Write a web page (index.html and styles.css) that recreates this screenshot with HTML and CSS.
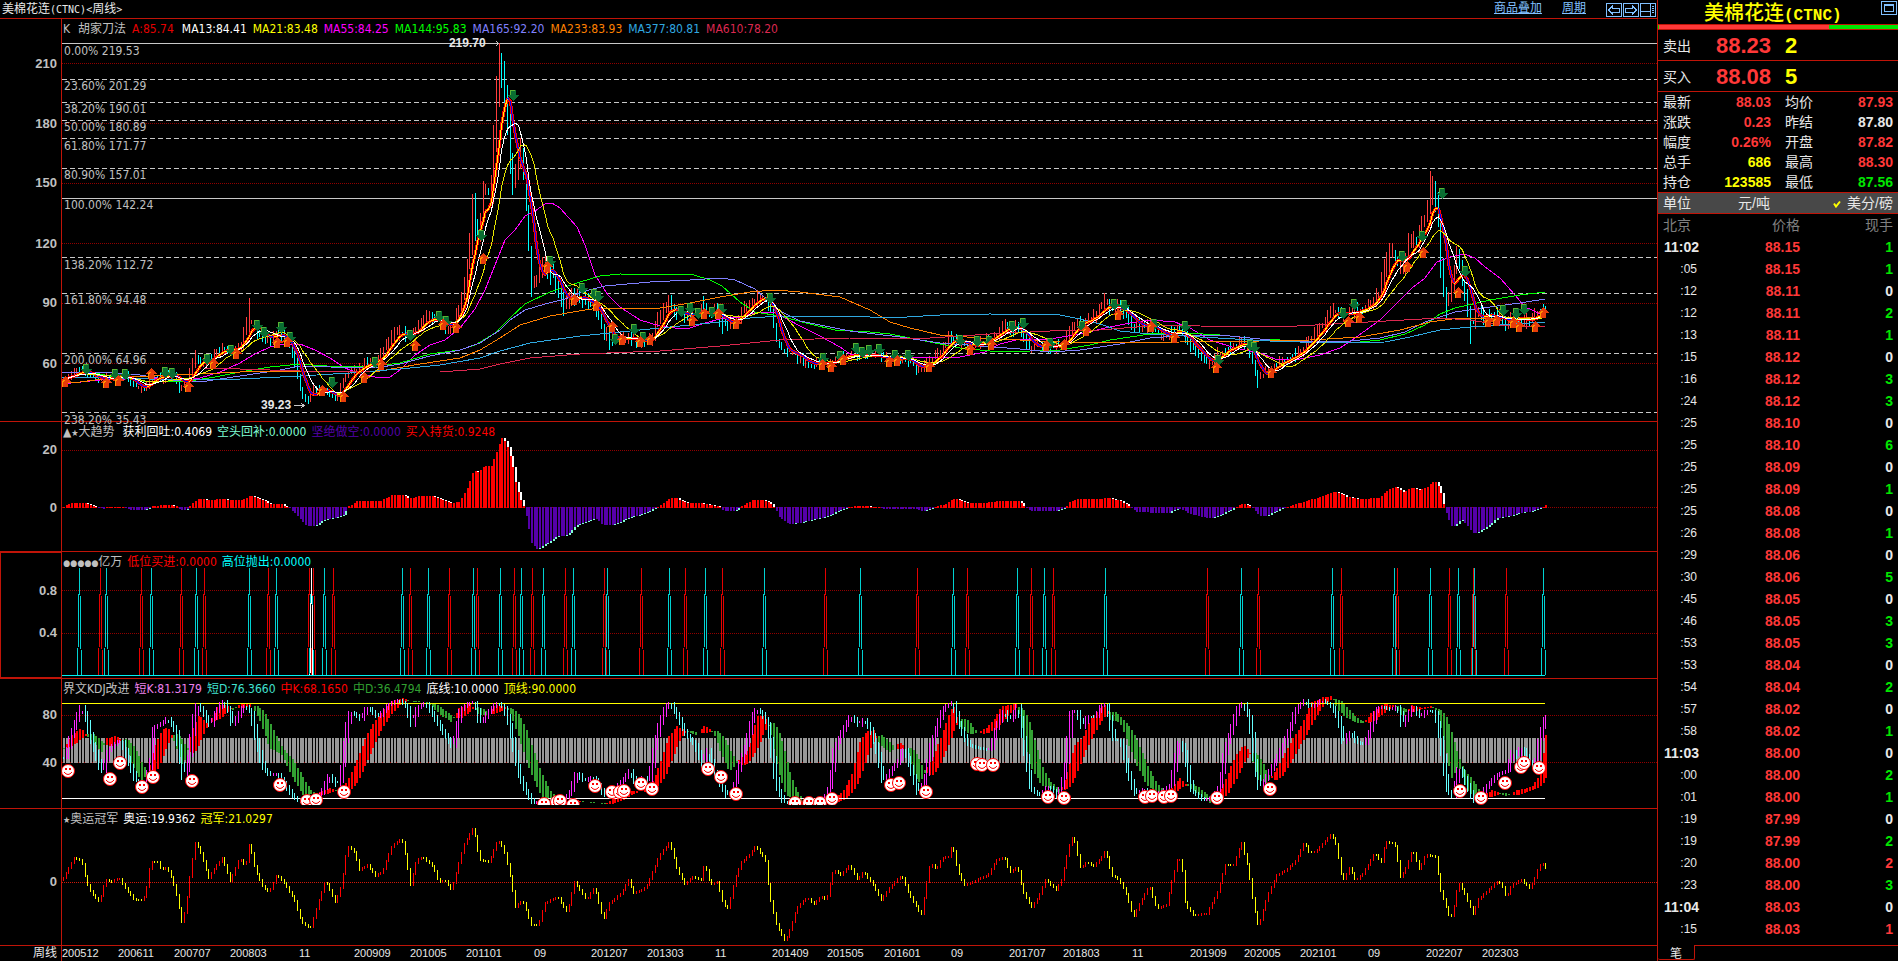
FILE: index.html
```html
<!DOCTYPE html>
<html lang="zh-CN">
<head>
    <meta charset="UTF-8">
    <meta name="viewport" content="width=device-width, initial-scale=1.0">
    <title>美棉花连(CTNC)</title>
    <link rel="stylesheet" href="styles.css">
</head>
<body>

    <main class="charts">
        <header class="topbar">
            <h1>美棉花连<span class="latin">(CTNC)&lt;</span>周线<span class="latin">&gt;</span></h1>
            <nav>
                <a href="#overlay">商品叠加</a>
                <a href="#period">周期</a>
                <div class="tools">
                    <button type="button" aria-label="后退">
                        <svg width="16" height="14" viewBox="0 0 16 14"><path d="M.5.5h15v13H.5zM2.5 7l4-4v2h7v4h-7v2z"/></svg>
                    </button>
                    <button type="button" aria-label="前进">
                        <svg width="16" height="14" viewBox="0 0 16 14"><path d="M.5.5h15v13H.5zM13.5 7l-4-4v2h-7v4h7v2z"/></svg>
                    </button>
                    <button type="button" aria-label="布局">
                        <svg width="16" height="14" viewBox="0 0 16 14"><path d="M.5.5h15v13H.5zM10.5.5v13M.5 8.5h10M12 3.5h2M12 5.5h2M12 7.5h2M12 9.5h2"/></svg>
                    </button>
                </div>
            </nav>
        </header>

        <section class="panel" id="price">
            <div class="scale"></div>
            <div class="plot">
                <div class="legend">
                    <span class="gray name-k">K</span><span class="gray">胡家刀法</span>
                    <span class="darkred name-a">A:85.74</span>
                    <span class="white">MA13:84.41</span>
                    <span class="yellow">MA21:83.48</span>
                    <span class="magenta">MA55:84.25</span>
                    <span class="lime">MA144:95.83</span>
                    <span class="violet">MA165:92.20</span>
                    <span class="orange">MA233:83.93</span>
                    <span class="sky">MA377:80.81</span>
                    <span class="rose">MA610:78.20</span>
                </div>
            </div>
        </section>

        <section class="panel" id="trend">
            <div class="scale"></div>
            <div class="plot">
                <div class="legend">
                    <span class="gray name">▲<small>★</small>大趋势</span>
                    <span class="white">获利回吐:0.4069</span>
                    <span class="aqua">空头回补:0.0000</span>
                    <span class="purple">坚绝做空:0.0000</span>
                    <span class="red">买入持货:0.9248</span>
                </div>
            </div>
        </section>

        <section class="panel selected" id="signal">
            <div class="scale"></div>
            <div class="plot">
                <div class="legend">
                    <span class="gray"><small>●●●●●</small>亿万</span>
                    <span class="red">低位买进:0.0000</span>
                    <span class="cyan">高位抛出:0.0000</span>
                </div>
            </div>
        </section>

        <section class="panel" id="kdj">
            <div class="scale"></div>
            <div class="plot">
                <div class="legend">
                    <span class="gray">界文KDJ改进</span>
                    <span class="pink">短K:81.3179</span>
                    <span class="turquoise">短D:76.3660</span>
                    <span class="red">中K:68.1650</span>
                    <span class="green">中D:36.4794</span>
                    <span class="white">底线:10.0000</span>
                    <span class="yellow">顶线:90.0000</span>
                </div>
            </div>
        </section>

        <section class="panel" id="champion">
            <div class="scale"></div>
            <div class="plot">
                <div class="legend">
                    <span class="gray"><small>★</small>奥运冠军</span>
                    <span class="white">奥运:19.9362</span>
                    <span class="yellow">冠军:21.0297</span>
                </div>
            </div>
        </section>

        <footer class="timeline">
            <span class="period">周线</span>
            <div class="dates" id="dates"></div>
        </footer>
    </main>

    <aside class="quote">
        <div class="quote-title">
            <h2>美棉花连<span>(CTNC)</span></h2>
            <button type="button" aria-label="窗口">
                <svg width="16" height="14" viewBox="0 0 16 14"><path d="M.5.5h15v13H.5zM3.5 3.5h9v7h-9zM3.5 4.5h9"/></svg>
            </button>
        </div>
        <div class="ratio"><i></i></div>
        <div class="best"><span>卖出</span><b class="up">88.23</b><b class="yellow">2</b></div>
        <div class="best"><span>买入</span><b class="up">88.08</b><b class="yellow">5</b></div>

        <dl class="facts">
            <dt>最新</dt><dd class="up">88.03</dd><dt>均价</dt><dd class="up">87.93</dd>
            <dt>涨跌</dt><dd class="up">0.23</dd><dt>昨结</dt><dd>87.80</dd>
            <dt>幅度</dt><dd class="up">0.26%</dd><dt>开盘</dt><dd class="up">87.82</dd>
            <dt>总手</dt><dd class="yellow">686</dd><dt>最高</dt><dd class="up">88.30</dd>
            <dt>持仓</dt><dd class="yellow">123585</dd><dt>最低</dt><dd class="down">87.56</dd>
        </dl>

        <div class="unit">
            <span>单位</span>
            <span class="unit-local">元/吨</span>
            <span class="unit-origin"><svg width="8" height="8" viewBox="0 0 8 8"><path d="M1 3.5l2 3L7 1.5"/></svg>美分/磅</span>
        </div>

        <table class="ticks">
            <thead>
                <tr><th>北京</th><th>价格</th><th>现手</th></tr>
            </thead>
            <tbody id="ticks"></tbody>
        </table>

        <div class="tabs">
            <button type="button" class="tab">笔</button>
        </div>
    </aside>

    <script src="chart.js"></script>
</body>
</html>
```
FILE: styles.css
```css
* {
    box-sizing: border-box;
}

body {
    margin: 0;
    height: 100vh;
    display: grid;
    grid-template-columns: minmax(0, 1fr) 241px;
    background: #000;
    color: #e8e8e8;
    font-family: "DejaVu Sans Condensed", "Liberation Sans", "Noto Sans CJK SC", sans-serif;
    font-size: 12px;
    line-height: 16px;
    overflow: hidden;
}

h1, h2, dl, dd {
    margin: 0;
    font-weight: normal;
}

button {
    padding: 0;
    border: 0;
    background: none;
    color: inherit;
    cursor: pointer;
}

.charts {
    display: grid;
    grid-template-rows: 18px 403fr 130fr 127fr 130fr 137fr 16px;
    min-height: 0;
}

/* top bar */
.topbar {
    display: flex;
    justify-content: space-between;
}

.topbar h1 {
    padding-left: 2px;
    font-size: 12px;
    line-height: 18px;
}

.topbar .latin {
    font-family: "DejaVu Sans Mono", monospace;
    font-size: 10px;
}

.topbar nav {
    display: flex;
    gap: 20px;
    padding-right: 1px;
}

.topbar a {
    color: #80c0ff;
    line-height: 17px;
}

.tools {
    display: flex;
    gap: 1px;
    padding: 1px 0 0;
}

.tools svg, .quote-title svg {
    display: block;
    fill: none;
    stroke: #80c0ff;
    shape-rendering: crispEdges;
}

/* chart panels */
.panel {
    display: grid;
    grid-template-columns: 62px minmax(0, 1fr);
    border-top: 1px solid #c01408;
    min-height: 0;
}

.scale {
    position: relative;
    border-right: 1px solid #c01408;
    color: #c0c0c0;
    font: bold 13px/16px "Liberation Sans", sans-serif;
}

.scale span {
    position: absolute;
    right: 4px;
    margin-top: -8px;
}

.selected .scale {
    outline: 1px solid #c01408;
    outline-offset: -1px;
    border: 1px solid #c01408;
}

.plot {
    position: relative;
    min-height: 0;
}

.plot > svg {
    position: absolute;
    width: 100%;
    height: 100%;
    fill: none;
    shape-rendering: crispEdges;
}

.legend {
    position: absolute;
    z-index: 1;
    top: 2px;
    left: 1px;
    display: flex;
    gap: 5px;
    white-space: nowrap;
}

#price .legend {
    gap: 6px;
}

.legend small {
    font-size: 9px;
}

.legend .name {
    margin-right: 3px;
}

.legend .name-k, .legend .name-a {
    margin-right: 2px;
}

.note {
    position: absolute;
    margin-top: -8px;
    color: #c0c0c0;
}

.note.extreme {
    color: #e8e8e8;
    font: bold 12px/16px "Liberation Sans", sans-serif;
}

.timeline {
    display: grid;
    grid-template-columns: 62px minmax(0, 1fr);
    border-top: 1px solid #c01408;
    line-height: 15px;
}

.period {
    padding-right: 4px;
    text-align: right;
    border-right: 1px solid #c01408;
}

.dates {
    display: flex;
    font-family: "Liberation Sans", sans-serif;
    font-size: 11px;
    overflow: hidden;
}

.dates span {
    flex-basis: 0;
    min-width: 0;
    white-space: nowrap;
}

/* quote column */
.quote {
    display: flex;
    flex-direction: column;
    border-left: 1px solid #c01408;
    font-family: "Liberation Sans", "Noto Sans CJK SC", sans-serif;
    font-size: 14px;
    min-height: 0;
}

.quote-title {
    display: flex;
    height: 24px;
    padding: 1px 1px 0 46px;
    justify-content: space-between;
    align-items: flex-start;
}

.quote-title h2 {
    color: #ff0;
    font-size: 20px;
    font-weight: 500;
    line-height: 24px;
}

.quote-title h2 span {
    font-family: "Liberation Mono", monospace;
    font-size: 16px;
    font-weight: bold;
}

.ratio {
    height: 6px;
    padding-left: 1px;
    border: solid #c01408;
    border-width: 1px 0;
    background: #00e600;
}

.ratio i {
    display: block;
    width: 71%;
    height: 4px;
    background: #ff3838;
}

.best {
    display: grid;
    grid-template-columns: 32px 76px 1fr;
    height: 31px;
    padding: 2px 0 0 5px;
    align-items: center;
    border-bottom: 1px solid #c01408;
}

.best b {
    font-size: 22px;
    text-align: right;
}

.best b:last-child {
    padding-left: 14px;
    text-align: left;
}

.facts {
    display: grid;
    grid-template-columns: 32px 76px 43px 1fr;
    padding: 0 5px;
    line-height: 20px;
}

.facts dd {
    text-align: right;
    font-weight: bold;
}

.facts dt:nth-of-type(even) {
    padding-left: 14px;
}

.unit {
    display: grid;
    grid-template-columns: 32px 75px 1fr;
    height: 22px;
    padding: 0 5px;
    border: solid #c01408;
    border-width: 1px 0;
    background: #484848;
    line-height: 20px;
}

.unit-local, .unit-origin {
    text-align: right;
}

.unit-origin svg {
    margin-right: 6px;
    fill: none;
    stroke: #ff0;
    stroke-width: 2;
}

.ticks {
    width: 100%;
    border-collapse: collapse;
    table-layout: fixed;
    line-height: 22px;
}

.ticks th, .ticks td {
    padding: 0;
    text-align: right;
    font-weight: bold;
}

.ticks th {
    color: #808080;
    font-weight: normal;
}

.ticks th:first-child {
    width: 41px;
    padding-left: 5px;
    text-align: left;
}

.ticks th:nth-child(2) {
    width: 101px;
}

.ticks th:last-child, .ticks td:last-child {
    padding-right: 5px;
}

.ticks .second {
    padding-right: 2px;
    font-size: 12px;
    font-weight: normal;
}

.tabs {
    height: 16px;
    margin-top: auto;
    border-top: 1px solid #c01408;
}

.tab {
    display: block;
    width: 37px;
    height: 15px;
    margin-top: -1px;
    border: 1px solid #c01408;
    border-width: 0 1px 1px 0;
    border-radius: 0 0 2px 2px;
    background: #000;
    font: 12px/15px "Noto Sans CJK SC", sans-serif;
}

/* colours */
.up { color: #ff3838; }
.down { color: #00e600; }
.gray { color: #c0c0c0; }
.white { color: #fff; }
.yellow { color: #ff0; }
.magenta { color: #f0f; }
.lime { color: #0f0; }
.violet { color: #8080ff; }
.orange { color: #ff8000; }
.sky { color: #30a8e0; }
.rose { color: #dc2850; }
.darkred { color: #e60000; }
.red { color: #f00; }
.aqua { color: #7fffd4; }
.purple { color: #5500aa; }
.cyan { color: #0ff; }
.pink { color: #ee82ee; }
.turquoise { color: #40e0d0; }
.green { color: #32a032; }
```
FILE: chart.js
```js
const LEFT = 62;
const WIDTH = 1595;
const LAST = 1545;
const STEP = 2.69;
const COUNT = Math.floor((LAST - LEFT) / STEP) + 1;

// "x,y x,y ..." to a list of pairs
function pairs(text) {
    return text.trim().split(/\s+/).map(p => p.split(',').map(Number));
}

// one value for every bar, interpolated between the points
function series(text) {
    const pts = pairs(text);
    const out = [];
    let k = 0;
    for (let i = 0; i < COUNT; i++) {
        const x = LEFT + i * STEP;
        while (k < pts.length - 2 && pts[k + 1][0] < x) k++;
        const [x1, y1] = pts[k];
        const [x2, y2] = pts[k + 1];
        const t = Math.max(0, Math.min(1, (x - x1) / (x2 - x1)));
        out.push(y1 + (y2 - y1) * t);
    }
    return out;
}

function average(list, n) {
    return list.map((v, i) => {
        const part = list.slice(Math.max(0, i - n + 1), i + 1);
        return part.reduce((a, b) => a + b, 0) / part.length;
    });
}

let seed = 7;
function random() {
    seed = (seed * 16807) % 2147483647;
    return seed / 2147483647;
}

const barX = i => Math.round(LEFT + 1 + i * STEP) + 0.5;

function path(d, color, width = 1, extra = '') {
    return `<path d="${d}" stroke="${color}" stroke-width="${width}" ${extra}/>`;
}

function line(list, color, width = 1) {
    return path('M' + list.map((v, i) => `${barX(i)} ${v.toFixed(1)}`).join('L'), color, width);
}

function level(y, color, extra = '', end = LEFT + WIDTH) {
    return path(`M${LEFT} ${y}H${end}`, color, 1, extra);
}

function draw(id, top, height, labels, content) {
    const panel = document.getElementById(id);
    const grid = labels.map(l => level(l[1], id === 'champion' ? '#d01808' : '#900000', 'stroke-dasharray="1 1"')).join('');
    panel.querySelector('.plot').insertAdjacentHTML('afterbegin',
        `<svg viewBox="${LEFT} ${top} ${WIDTH} ${height}" preserveAspectRatio="none">${grid}${content}</svg>`);
    panel.querySelector('.scale').innerHTML = labels.map(l =>
        `<span style="top:${((l[1] - top) / height * 100).toFixed(2)}%">${l[0]}</span>`).join('');
}

/* ---------- price ---------- */
const close = series(`62,380 70,374 78,371 86,373 95,380 103,378 112,378 122,374 130,384 143,390 148,378 152,374
160,380 166,373 172,374 178,388 186,380 190,366 194,356 200,365 208,358 216,350 224,350 232,350 240,342 245,325
250,320 255,330 260,338 268,340 273,330 280,338 290,350 294,365 300,395 306,402 312,388 320,390 328,393 334,400
340,385 348,372 355,370 365,362 375,362 384,346 392,334 400,332 408,338 415,326 425,318 435,320 445,328 452,322
458,305 463,280 468,245 471,205 474,235 478,225 481,195 485,190 489,200 492,150 495,90 498,60 501,80 505,110
509,170 512,190 515,165 518,150 521,160 524,200 527,245 530,285 533,285 537,270 540,265 546,270 553,280 558,295
563,308 570,295 578,297 585,303 592,305 598,315 602,338 606,330 612,342 620,337 628,338 640,342 650,338 655,322
660,315 667,304 672,312 680,314 690,316 700,310 706,313 715,312 722,325 730,322 740,312 752,300 758,297 764,298
768,303 772,325 776,345 782,352 790,352 800,360 808,366 816,362 825,365 832,360 840,357 850,355 860,355 870,355
880,358 890,358 900,358 910,362 916,372 922,366 930,360 940,350 947,338 955,340 965,346 975,345 985,340 995,334
1002,326 1010,330 1016,325 1022,336 1028,348 1040,345 1050,347 1060,345 1067,334 1072,325 1080,322 1090,318
1098,309 1105,303 1112,310 1118,308 1124,312 1130,325 1140,325 1150,325 1158,336 1165,335 1175,330 1182,335
1190,348 1197,352 1203,362 1210,365 1216,353 1224,350 1234,345 1240,342 1247,346 1252,368 1257,380 1263,372
1272,366 1282,360 1292,356 1300,349 1310,338 1320,326 1327,315 1333,309 1340,316 1350,312 1360,310 1370,302
1378,292 1383,268 1390,252 1396,265 1402,262 1409,240 1416,242 1422,222 1428,205 1430,185 1433,195 1437,230
1440,280 1444,300 1448,294 1452,270 1456,256 1460,275 1464,300 1470,325 1476,312 1484,318 1492,315 1498,318
1504,324 1512,315 1520,322 1530,318 1538,311 1545,313`);

// highs and lows that stand out: x, y
const wicks = pairs(`249,298 471,194 474,168 482,172 486,184 495,52 498,57 500,43 503,69 507,85 668,295 703,296
1017,309 1105,293 1332,292 1390,243 1430,171 1434,179 1456,246`);
const dips = pairs(`307,406 180,393 334,402 531,297 538,296 564,316 603,352 609,350 917,375 783,360 1258,388 1471,344
1447,320 722,334`);

let red = '', cyan = '';
let prev = close[0];
close.forEach((c, i) => {
    const x = barX(i);
    const calm = 4 + (400 - c) * 0.06;
    let top = Math.min(c, prev) - random() * calm;
    let bottom = Math.max(c, prev) + random() * calm;
    wicks.forEach(w => { if (Math.abs(w[0] - x) < STEP / 2) top = w[1]; });
    dips.forEach(w => { if (Math.abs(w[0] - x) < STEP / 2) bottom = w[1]; });
    const d = `M${x} ${top.toFixed(1)}V${bottom.toFixed(1)}`;
    if (c + (random() - 0.5) * 6 < prev) red += d; else cyan += d;
    prev = c;
});

const fast = average(close, 6);
let warm = '', blue = '';
fast.forEach((v, i) => {
    if (!i) return;
    const d = `M${barX(i - 1)} ${fast[i - 1].toFixed(1)}L${barX(i)} ${v.toFixed(1)}`;
    if (v <= fast[i - 1]) warm += d; else blue += d;
});

const averages = [
    ['#f0f', `62,384 100,380 150,378 180,381 200,378 220,372 240,363 255,354 270,347 285,344 300,344 315,350 330,358 345,368
    360,374 380,378 390,377 400,370 415,355 430,345 445,340 460,328 475,309 485,290 495,265 505,240 515,230 525,216 535,211
    545,204 552,203 560,208 577,227 585,245 595,275 608,295 620,307 640,320 660,326 675,328 690,328 705,323 720,319 740,317
    758,312 775,312 785,318 800,326 820,336 840,347 850,354 860,356 900,357 940,358 960,357 985,352 1000,344 1020,339
    1050,339 1080,334 1105,328 1130,323 1150,320 1175,322 1190,328 1210,340 1235,348 1260,353 1275,359 1300,359 1320,355
    1340,348 1355,338 1380,320 1400,300 1412,288 1425,278 1437,262 1450,257 1464,254 1475,258 1485,267 1500,278 1515,295
    1525,307 1532,310 1545,316`],
    ['#0f0', `62,373 90,372 110,376 150,382 190,381 215,377 240,372 270,367 300,364 340,367 375,366 400,363 430,354 460,350
    475,345 495,333 510,318 525,304 550,292 580,282 600,276 620,274 694,275 710,280 722,286 740,302 755,312 780,316 810,324
    835,330 870,332 890,334 930,342 960,348 1000,352 1030,351 1060,350 1090,345 1110,340 1150,334 1185,333 1220,335
    1260,339 1300,341 1350,343 1380,340 1405,334 1425,325 1440,314 1455,308 1490,300 1520,295 1545,292`],
    ['#8080ff', `62,372 100,372 140,375 170,380 200,382 240,376 280,370 300,366 330,367 375,368 400,364 430,356 460,350
    480,343 500,330 510,320 525,310 545,304 565,299 585,291 605,286 650,282 690,280 720,278 735,280 755,289 780,311 800,321
    850,331 900,337 940,343 980,346 1020,349 1050,352 1080,350 1120,344 1150,338 1190,335 1230,336 1270,340 1310,342
    1350,341 1380,338 1405,332 1425,322 1455,312 1490,307 1520,303 1545,299`],
    ['#ff8000', `62,382 80,382 110,378 150,376 200,374 260,371 330,371 380,371 420,364 460,358 480,350 500,338 520,325
    550,316 585,310 600,308 660,308 690,303 720,297 750,292 775,290 800,292 840,297 870,310 890,322 910,328 940,335 980,338
    1060,342 1130,343 1180,342 1260,341 1310,340 1360,337 1400,330 1430,322 1460,318 1500,318 1545,317`],
    ['#30a8e0', `62,377 150,379 240,379 300,376 350,373 400,369 440,365 480,358 500,351 530,343 580,336 620,332 680,326
    720,322 750,318 780,316 850,316 890,318 940,315 990,314 1060,315 1080,319 1100,324 1120,331 1150,334 1200,337 1270,341
    1330,343 1385,342 1410,337 1440,330 1470,327 1545,322`],
    ['#dc2850', `204,368 240,369 300,371 370,372 440,372 480,369 500,364 530,358 580,354 660,351 720,346 780,340 850,338
    930,338 990,334 1050,331 1100,330 1160,325 1200,326 1280,327 1350,323 1440,318 1470,320 1500,325 1545,327`]
];

const sells = pairs(`86,369 115,374 125,374 165,372 172,373 207,359 231,350 257,325 264,332 281,327 290,337 332,382
375,362 410,335 439,316 446,321 481,235 513,95 550,261 582,288 594,294 598,296 615,339 634,329 643,337 681,311 690,308
698,313 712,312 721,309 770,298 823,358 840,356 856,348 862,352 869,350 879,349 895,355 908,355 960,340 977,341 989,341
1012,326 1023,323 1050,343 1082,326 1114,304 1124,305 1154,324 1185,326 1218,360 1250,345 1254,347 1343,313 1354,304
1402,256 1422,236 1442,193 1465,271 1503,310 1516,313 1524,309`);
const buys = pairs(`65,382 106,383 118,381 151,374 188,387 213,364 236,354 277,343 287,342 322,391 343,397 364,378
381,365 415,346 443,325 456,328 483,259 547,267 574,300 596,306 612,327 622,340 640,342 650,340 692,321 704,314 718,314
736,324 822,365 831,367 843,360 889,362 897,361 929,367 970,350 991,345 1046,346 1064,345 1086,331 1118,315 1151,327
1174,338 1216,368 1271,373 1348,322 1359,318 1407,267 1423,253 1458,293 1488,322 1496,321 1513,323 1519,327 1535,327
1543,313`);

const arrows =
    sells.map(p => `<path fill="#0a6e32" d="M${p[0] - 3} ${p[1] - 5}h6v5h3l-6 6l-6-6h3z"/><path stroke="#5ab432" d="M${p[0] - 3} ${p[1] - 4.5}h5M${p[0] - 2.5} ${p[1] - 4}v4"/>`).join('') +
    buys.map(p => `<path fill="#e63c0a" d="M${p[0] - 3} ${p[1] + 5}h6v-5h3l-6-6l-6 6h3z"/><path stroke="#ff9600" d="M${p[0] - 2.5} ${p[1] + 5}v-5l2-2"/>`).join('');

const fibs = [
    [43.5, '0.00% 219.53'], [79.5, '23.60% 201.29'], [102.5, '38.20% 190.01'], [120.5, '50.00% 180.89'],
    [138.5, '61.80% 171.77'], [168.5, '80.90% 157.01'], [198.5, '100.00% 142.24'], [257.5, '138.20% 112.72'],
    [293.5, '161.80% 94.48'], [353.5, '200.00% 64.96'], [412.5, '238.20% 35.43']
];

draw('price', 19, 402,
    [[210, 63.5], [180, 123.5], [150, 183.5], [120, 243.5], [90, 303.5], [60, 363.5]],
    fibs.map(f => level(f[0], '#c8c8c8', /^(0|100)\./.test(f[1]) ? '' : 'stroke-dasharray="5 3"')).join('') +
    path(red, '#ff3c3c') + path(cyan, '#0ff') +
    averages.map(a => path('M' + pairs(a[1]).map(p => p.join(' ')).join('L'), a[0])).join('') +
    path(warm, '#f00', 3) + path(blue, '#f00', 3) + path(warm, '#ff0') + path(blue, '#00f') +
    line(average(close, 15), '#e6e600') + line(average(close, 9), '#fff') +
    path('M294 405.5H304M301 403l3 2.5l-3 2.5M496 41l2 2.5l-2 2.5', '#c8c8c8') +
    arrows);

const notes = fibs.map(f => [64, f[0] + 7, f[1], '']);
notes.push([449, 43.5, '219.70', ' extreme'], [261, 405.5, '39.23', ' extreme']);
document.querySelector('#price .plot').insertAdjacentHTML('beforeend', notes.map(n =>
    `<span class="note${n[3]}" style="left:${((n[0] - LEFT) / WIDTH * 100).toFixed(2)}%;top:${((n[1] - 19) / 402 * 100).toFixed(2)}%">${n[2]}</span>`).join(''));

/* ---------- trend histogram ---------- */
const trend = series(`62,1 70,4 80,5 88,3 95,0 100,-1 103,-1 106,1 120,1 128,-2 140,-3 147,-1 150,1 165,3 175,1 180,-3
187,-1 190,4 198,9 210,7 220,9 228,7 240,8 250,12 258,9 268,4 280,3 288,-1 295,-7 305,-18 313,-19 323,-12 335,-10 342,-7
347,1 355,6 368,7 380,7 390,12 400,13 408,9 420,12 430,12 440,8 450,4 458,6 466,20 472,38 476,35 483,42 490,42 496,58
500,70 504,66 510,47 515,20 520,5 523,0 526,-15 530,-35 536,-42 545,-36 555,-29 565,-28 575,-18 585,-14 595,-11 602,-18
612,-17 628,-10 640,-7 655,0 660,3 668,9 673,10 685,5 700,4 718,1 723,-4 733,-3 738,0 750,7 762,8 768,5 773,0 778,-10
787,-17 800,-15 825,-9 845,0 860,2 878,0 882,-2 900,-1 912,-1 922,-4 932,0 945,4 952,9 965,5 980,4 1000,7 1018,6 1024,0
1030,-4 1055,-3 1064,0 1068,5 1075,8 1103,9 1107,10 1120,6 1128,1 1135,-4 1148,-5 1165,-6 1178,-1 1190,-7 1208,-11 1220,-7
1232,-1 1240,4 1250,1 1258,-9 1265,-8 1280,-1 1290,2 1310,8 1328,14 1333,16 1345,11 1360,8 1378,10 1386,17 1394,21
1402,15 1410,20 1418,17 1425,20 1433,27 1438,20 1442,3 1446,-10 1451,-20 1460,-12 1466,-18 1471,-26 1478,-24 1487,-18
1495,-11 1510,-8 1520,-5 1530,-4 1538,-1 1545,3`);
let rise = '', fall = '', fade = '', recover = '';
trend.forEach((v, i) => {
    const x = barX(i) + 0.5;
    const y = Math.round(507.5 - v);
    const old = Math.round(507.5 - (trend[i - 1] || 0));
    if (v >= 0) {
        rise += `M${x} 508V${y}`;
        if (old < y) fade += `M${x} ${y}V${old}`;
    } else {
        fall += `M${x} 507V${y}`;
        if (old > y && old < 560) recover += `M${x} ${y}V${old}`;
    }
});
draw('trend', 422, 129, [[20, 450.5], [0, 507.5]],
    path(rise, '#f00', 2) + path(fall, '#5500aa', 2) + path(fade, '#fff', 2) + path(recover, '#7fffd4', 2));

/* ---------- signal spikes ---------- */
const highs = [79.5, 106.5, 151.5, 196.5, 249.5, 276.5, 311.5, 324.5, 402.5, 428.5, 473.5, 500.5, 521.5, 543.5, 573.5, 607.5,
    669.5, 705.5, 764.5, 860.5, 953.5, 1017.5, 1044.5, 1105.5, 1241.5, 1332.5, 1394.5, 1430.5, 1458.5, 1474.5, 1543.5];
const lows = [100.5, 141.5, 181.5, 204.5, 268.5, 309.5, 313.5, 333.5, 410.5, 449.5, 477.5, 514.5, 532.5, 565.5, 604.5,
    641.5, 685.5, 722.5, 825.5, 917.5, 967.5, 1031.5, 1053.5, 1207.5, 1258.5, 1341.5, 1397.5, 1449.5, 1473.5, 1506.5];
const spikes = list => list.map(x => `M${x - 2} 675L${x} 568L${x + 2} 675`).join('');
draw('signal', 552, 126, [['0.8', 590.5], ['0.4', 633.5]],
    `${path(spikes(lows), '#e60000')}${path(spikes(highs), '#00d2d2')}${path('M310 675L311.5 568L313 675', '#fff')}` +
    level(675.5, '#00f0f0', '', LAST));

/* ---------- kdj ---------- */
const short = series(`62,758 68,735 78,706 82,715 88,740 99,775 104,752 110,745 118,740 125,760 132,780 142,785 148,760
150,728 158,724 164,718 172,730 176,750 180,780 184,768 187,748 190,720 194,703 200,712 207,727 212,713 220,700 226,712
229,726 235,715 241,705 248,712 254,745 260,768 267,776 274,773 280,782 290,797 300,803 312,803 320,790 326,774 335,788
338,775 342,740 346,712 352,714 358,720 364,706 375,718 385,705 395,700 403,705 409,726 414,708 422,702 430,715 440,732
450,748 457,710 465,703 472,702 477,725 485,712 494,702 500,706 505,720 510,745 516,775 522,790 530,803 545,800 560,803
568,790 574,770 580,782 590,776 602,797 610,790 620,780 627,770 632,783 640,777 646,782 651,750 656,725 663,705 667,703
675,717 683,735 692,745 700,768 704,745 710,770 718,785 724,797 730,790 736,765 743,745 747,725 752,708 758,712 764,722
768,745 773,785 780,802 800,804 820,803 827,785 831,750 840,730 848,715 856,727 860,718 868,730 875,755 880,783 888,770
896,760 900,745 908,770 915,795 922,780 928,745 935,722 940,708 950,702 955,722 965,745 975,748 987,750 993,728 1000,710
1007,722 1015,703 1020,740 1028,790 1038,796 1045,785 1055,797 1062,770 1065,740 1068,712 1073,710 1079,728 1085,715
1092,718 1098,705 1104,704 1107,725 1111,740 1118,740 1124,770 1132,795 1142,788 1150,797 1168,785 1172,760 1175,742
1180,745 1188,790 1200,800 1210,798 1217,785 1222,750 1228,730 1234,708 1240,702 1247,720 1251,760 1256,790 1262,780
1270,765 1280,745 1288,725 1292,710 1302,700 1308,708 1318,700 1328,705 1336,720 1340,745 1347,730 1353,742 1361,745
1368,728 1373,708 1380,707 1388,710 1395,705 1399,726 1405,715 1410,706 1417,718 1424,710 1432,712 1438,745 1444,790
1450,797 1456,765 1464,785 1471,803 1477,795 1485,785 1495,774 1505,770 1508,750 1515,758 1518,745 1525,760 1532,770
1536,740 1541,718 1545,715`);
const middle = series(`62,748 70,735 79,728 86,737 94,745 100,752 105,738 115,736 122,742 130,765 140,782 147,770 152,748
160,730 166,727 173,742 180,765 184,758 190,730 197,715 207,725 216,705 225,705 232,710 240,702 250,705 258,720 268,748
280,755 292,780 302,796 315,793 328,788 340,793 346,780 355,760 365,735 375,718 388,702 400,698 412,702 425,702 440,716
450,722 457,708 468,703 477,715 485,715 493,705 502,706 508,712 518,740 528,770 540,797 560,802 575,800 590,803 605,803
625,790 640,792 650,783 658,765 666,738 675,726 685,732 695,735 703,725 712,733 720,755 728,772 735,762 745,752 752,730
756,716 763,716 769,732 776,770 784,795 800,802 830,802 842,790 850,775 858,742 864,732 872,730 878,745 888,752 898,742
906,750 912,775 918,783 925,768 932,755 940,735 948,712 952,705 958,728 970,735 985,728 992,720 1000,706 1010,705
1015,703 1020,730 1028,765 1040,785 1058,793 1066,770 1073,745 1082,735 1088,720 1098,708 1104,704 1108,720 1118,722
1125,740 1135,765 1145,785 1155,794 1170,788 1178,778 1190,790 1208,803 1218,790 1226,775 1234,755 1242,745 1248,752
1256,780 1265,783 1275,768 1290,740 1300,725 1310,702 1322,697 1330,696 1336,710 1345,718 1355,723 1362,723 1370,712
1382,704 1393,705 1400,717 1410,705 1420,708 1430,706 1436,712 1444,750 1450,778 1457,765 1465,790 1475,800 1490,790
1505,796 1515,790 1530,787 1538,775 1545,730`);
const slow = average(average(middle, 4), 6);

let band = '', over = '', under = '', up = '', down = '';
for (let i = 0; i < COUNT; i++) {
    const x = barX(i);
    band += `M${x + 0.5} 738V763`;
    const body = `M${x + 0.5} ${middle[i].toFixed(1)}V${(slow[i] + 1).toFixed(1)}`;
    if (middle[i] < slow[i]) over += body; else under += body;
    const from = short[Math.max(0, i - 2)];
    const d = `M${x} ${(Math.min(from, short[i]) - 1).toFixed(1)}V${(Math.max(from, short[i]) + 1).toFixed(1)}`;
    if (short[i] < from) up += d; else down += d;
}

const faces = pairs(`68,771 110,779 120,763 142,787 153,777 192,781 280,785 307,801 316,800 344,792 544,804 557,802
560,801 573,805 595,786 612,792 620,792 624,791 641,784 652,789 708,769 721,777 736,794 795,803 809,803 820,803 832,799
891,785 899,783 926,792 977,764 982,765 993,765 1048,797 1064,798 1145,797 1152,796 1164,797 1171,796 1217,798 1270,789
1460,791 1481,798 1505,783 1521,767 1524,763 1539,768`);
const smile = p => `<g><circle cx="${p[0]}" cy="${p[1]}" r="6.5" fill="#fff" stroke="#f00"/>` +
    `<path stroke="#f00" stroke-width="2" d="M${p[0] - 3} ${p[1] - 2}h2M${p[0] + 1} ${p[1] - 2}h2"/>` +
    `<path stroke="#f00" d="M${p[0] - 4} ${p[1] + 1}q4 5 8 0"/></g>`;

draw('kdj', 679, 129, [[80, 715.5], [40, 762.5]],
    path(band, '#989898', 2) + path(over, '#f00', 2) + path(under, '#32a032', 2) +
    level(703.5, '#ff0', '', LAST) + level(798.5, '#fff', '', LAST) +
    path(up, '#ff28ff') + path(down, '#6ff') +
    `<clipPath id="floor"><rect x="${LEFT}" y="679" width="${WIDTH}" height="126"/></clipPath>` +
    `<g clip-path="url(#floor)" shape-rendering="auto">${faces.map(smile).join('')}</g>`);

/* ---------- champion ---------- */
const champ = series(`62,878 68,867 73,858 80,860 85,882 90,893 98,902 104,880 110,882 118,878 125,890 133,900 142,900
146,885 149,862 156,862 160,870 165,867 171,880 175,895 181,925 186,895 190,865 194,842 200,855 207,878 214,867 221,858
229,882 238,858 244,867 248,843 254,870 262,888 268,892 275,875 284,885 293,900 300,922 309,929 316,905 324,880 334,903
340,885 346,846 353,852 358,870 366,865 374,876 381,872 390,847 400,838 403,850 409,885 415,860 421,857 432,867 437,882
443,880 450,890 456,868 463,843 472,827 476,850 478,860 488,862 496,840 502,848 508,873 514,907 521,900 530,925 537,925
543,903 556,897 566,912 573,882 585,900 593,887 602,920 608,903 620,893 627,880 632,893 640,890 645,887 650,875 658,855
668,842 676,870 684,885 690,877 700,880 703,863 709,885 716,882 722,905 727,908 733,880 740,862 748,855 754,846 764,860
768,895 775,925 784,942 790,925 795,908 806,897 812,905 820,896 825,900 832,870 840,875 848,865 856,880 862,872 872,885
880,900 888,888 900,875 908,895 920,915 925,885 929,862 935,870 940,858 947,857 951,843 956,870 963,885 975,880 987,875
995,860 1003,857 1008,873 1016,867 1021,890 1030,908 1038,895 1044,880 1055,890 1060,880 1067,848 1072,835 1079,868
1085,862 1092,866 1100,858 1104,850 1110,875 1118,880 1125,895 1132,917 1140,900 1148,886 1155,908 1165,905 1170,882
1177,855 1181,870 1184,905 1192,915 1205,914 1215,895 1224,865 1232,865 1240,842 1247,870 1252,905 1257,927 1266,895
1275,875 1285,870 1295,860 1303,842 1308,853 1315,851 1330,834 1335,845 1341,882 1348,868 1354,881 1362,873 1373,853
1380,862 1384,842 1393,843 1399,877 1405,867 1411,849 1418,870 1424,855 1434,857 1439,890 1449,920 1453,905 1457,882
1464,895 1472,915 1476,900 1487,890 1495,882 1500,884 1505,898 1510,885 1520,880 1528,888 1532,882 1538,865 1542,864
1545,869`);
let gain = '', loss = '';
champ.forEach((v, i) => {
    const from = i ? champ[i - 1] : v + 2;
    const d = `M${barX(i)} ${(Math.min(from, v) - 1).toFixed(1)}V${(Math.max(from, v) + 1).toFixed(1)}`;
    if (v < from) gain += d; else loss += d;
});
draw('champion', 809, 136, [[0, 882.5]], path(gain, '#f00') + path(loss, '#ff0'));

/* ---------- dates under the charts ---------- */
const dates = [['200512', 62], ['200611', 118], ['200707', 174], ['200803', 230], ['11', 299], ['200909', 354],
    ['201005', 410], ['201101', 466], ['09', 534], ['201207', 591], ['201303', 647], ['11', 715], ['201409', 772],
    ['201505', 827], ['201601', 884], ['09', 951], ['201707', 1009], ['201803', 1063], ['11', 1132], ['201909', 1190],
    ['202005', 1244], ['202101', 1300], ['09', 1368], ['202207', 1426], ['202303', 1482]];
document.getElementById('dates').innerHTML = dates.map((d, i) => {
    const next = i + 1 < dates.length ? dates[i + 1][1] : LEFT + WIDTH;
    return `<span style="flex-grow:${next - d[1]}">${d[0]}</span>`;
}).join('');

/* ---------- trade list ---------- */
const ticks = [
    ['11:02', '88.15', 1], [':05', '88.15', 1], [':12', '88.11', 0], [':12', '88.11', 2], [':13', '88.11', 1],
    [':15', '88.12', 0], [':16', '88.12', 3], [':24', '88.12', 3], [':25', '88.10', 0], [':25', '88.10', 6],
    [':25', '88.09', 0], [':25', '88.09', 1], [':25', '88.08', 0], [':26', '88.08', 1], [':29', '88.06', 0],
    [':30', '88.06', 5], [':45', '88.05', 0], [':46', '88.05', 3], [':53', '88.05', 3], [':53', '88.04', 0],
    [':54', '88.04', 2], [':57', '88.02', 0], [':58', '88.02', 1], ['11:03', '88.00', 0], [':00', '88.00', 2],
    [':01', '88.00', 1], [':19', '87.99', 0], [':19', '87.99', 2], [':20', '88.00', 2, 'up'], [':23', '88.00', 3],
    ['11:04', '88.03', 0], [':15', '88.03', 1, 'up']
];
document.getElementById('ticks').innerHTML = ticks.map(t =>
    `<tr><td class="${t[0].length < 4 ? 'second' : 'minute'}">${t[0]}</td><td class="up">${t[1]}</td>` +
    `<td class="${t[3] || (t[2] ? 'down' : '')}">${t[2]}</td></tr>`).join('');
```
